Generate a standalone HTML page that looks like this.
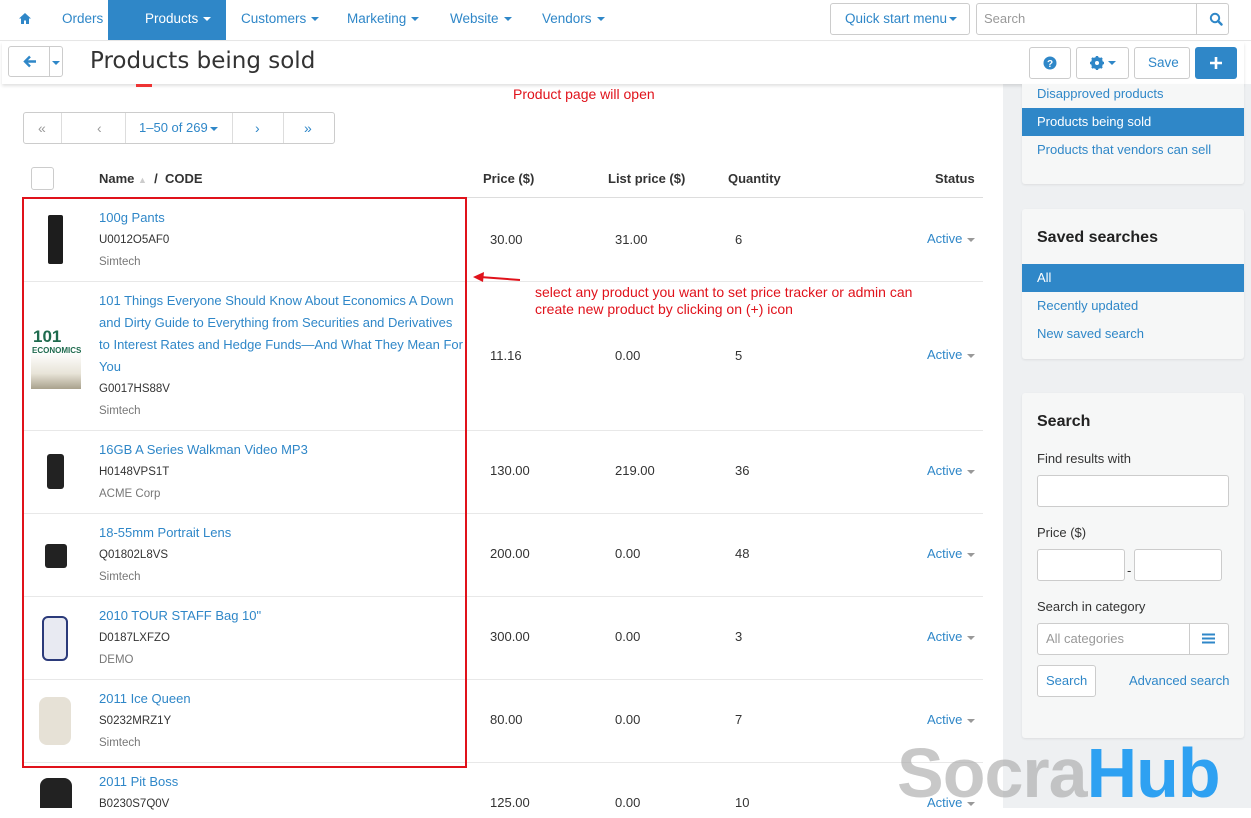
<!DOCTYPE html>
<html><head><meta charset="utf-8"><style>
*{box-sizing:border-box;margin:0;padding:0}
body{width:1251px;height:808px;overflow:hidden;position:relative;background:#fff;font-family:"Liberation Sans",sans-serif;font-size:13px;color:#333}
.a{position:absolute;white-space:nowrap}
.l{color:#2f87c8}
.c{display:inline-block;width:0;height:0;border-left:4px solid transparent;border-right:4px solid transparent;border-top:4px solid currentColor;vertical-align:middle;margin-left:5px}
.btn{position:absolute;border:1px solid #ccc;border-radius:3px;background:#fff}
.t{line-height:22px}
.sm{font-size:11.5px}
.g{color:#777}
</style></head><body>
<div class="a" style="left:1003px;top:84px;width:248px;height:724px;background:#eef0f2"></div>
<div class="a" style="left:0;top:0;width:1251px;height:41px;background:#fff;border-bottom:1px solid #e6e6e6"></div>
<svg class="a" style="left:18px;top:12px" width="14" height="13" viewBox="0 0 14 13"><path d="M7 1L1 6.5h2V12h3V8.5h2V12h3V6.5h2z" fill="#2f87c8"/></svg>
<div class="a l t" style="left:62px;top:8px;font-size:13.5px">Orders<span class="c"></span></div>
<div class="a" style="left:108px;top:0;width:118px;height:40px;background:#2f87c8"></div>
<div class="a t" style="left:145px;top:8px;font-size:13.5px;color:#fff">Products<span class="c"></span></div>
<div class="a l t" style="left:241px;top:8px;font-size:13.5px">Customers<span class="c"></span></div>
<div class="a l t" style="left:347px;top:8px;font-size:13.5px">Marketing<span class="c"></span></div>
<div class="a l t" style="left:450px;top:8px;font-size:13.5px">Website<span class="c"></span></div>
<div class="a l t" style="left:542px;top:8px;font-size:13.5px">Vendors<span class="c"></span></div>
<div class="btn" style="left:830px;top:3px;width:140px;height:32px"></div>
<div class="a l t" style="left:845px;top:8px;font-size:13.5px">Quick start menu<span class="c" style="margin-left:2px"></span></div>
<div class="btn" style="left:976px;top:3px;width:253px;height:32px"></div>
<div class="a t" style="left:984px;top:8px;font-size:13px;color:#999">Search</div>
<div class="a" style="left:1196px;top:4px;width:1px;height:30px;background:#ccc"></div>
<svg class="a" style="left:1209px;top:12px" width="14" height="14" viewBox="0 0 14 14"><circle cx="6" cy="6" r="4.2" stroke="#2f87c8" stroke-width="2" fill="none"/><path d="M9 9l3.5 3.5" stroke="#2f87c8" stroke-width="2.4" stroke-linecap="round"/></svg>
<div class="a" style="left:2px;top:42px;width:1242px;height:42px;background:#fff;box-shadow:0 2px 3px rgba(0,0,0,.12)"></div>
<div class="btn" style="left:8px;top:46px;width:55px;height:31px"></div>
<div class="a" style="left:49px;top:47px;width:1px;height:29px;background:#ccc"></div>
<svg class="a" style="left:23px;top:55px" width="14" height="13" viewBox="0 0 14 13"><path d="M7 1.5L2 6.5 7 11.5M2.5 6.5H13" stroke="#2f87c8" stroke-width="2.4" fill="none"/></svg>
<div class="a" style="left:48px;top:58px;color:#2f87c8;line-height:8px"><span class="c" style="margin-left:4px"></span></div>
<div class="a" style="left:90px;top:45px;font-family:'DejaVu Sans',sans-serif;font-size:23px;color:#333;line-height:32px">Products being sold</div>
<div class="btn" style="left:1029px;top:47px;width:42px;height:32px"></div>
<svg class="a" style="left:1043px;top:56px" width="14" height="14" viewBox="0 0 14 14"><circle cx="7" cy="7" r="6.5" fill="#2f87c8"/><text x="7" y="11" font-size="10" font-weight="bold" fill="#fff" text-anchor="middle" font-family="Liberation Sans">?</text></svg>
<div class="btn" style="left:1076px;top:47px;width:53px;height:32px"></div>
<svg class="a" style="left:1090px;top:56px" width="14" height="14" viewBox="0 0 14 14"><circle cx="7" cy="7" r="4.5" fill="none" stroke="#2f87c8" stroke-width="3"/><path d="M7 0v14M0 7h14M2 2l10 10M12 2L2 12" stroke="#2f87c8" stroke-width="2.4"/><circle cx="7" cy="7" r="2" fill="#fff"/></svg>
<div class="a" style="left:1103px;top:58px;color:#2f87c8;line-height:8px"><span class="c"></span></div>
<div class="btn" style="left:1134px;top:47px;width:56px;height:32px"></div>
<div class="a l t" style="left:1148px;top:52px;font-size:13.5px">Save</div>
<div class="a" style="left:1195px;top:47px;width:42px;height:32px;background:#2f87c8;border-radius:3px"></div>
<svg class="a" style="left:1209px;top:56px" width="14" height="14"><path d="M7 1v12M1 7h12" stroke="#fff" stroke-width="2.6"/></svg>
<div class="a" style="left:136px;top:84px;width:16px;height:3px;background:#e33"></div>
<div class="a" style="left:513px;top:86px;font-size:14px;color:#e0121b">Product page will open</div>
<div class="btn" style="left:23px;top:112px;width:312px;height:32px"></div>
<div class="a" style="left:61px;top:113px;width:1px;height:30px;background:#ddd"></div>
<div class="a" style="left:125px;top:113px;width:1px;height:30px;background:#ddd"></div>
<div class="a" style="left:232px;top:113px;width:1px;height:30px;background:#ddd"></div>
<div class="a" style="left:283px;top:113px;width:1px;height:30px;background:#ddd"></div>
<div class="a t" style="left:38px;top:117px;color:#999;font-size:14px">«</div>
<div class="a t" style="left:97px;top:117px;color:#999;font-size:14px">‹</div>
<div class="a l t" style="left:139px;top:117px">1–50 of 269<span class="c" style="margin-left:2px"></span></div>
<div class="a l t" style="left:255px;top:117px;font-size:14px">›</div>
<div class="a l t" style="left:304px;top:117px;font-size:14px">»</div>
<div class="btn" style="left:31px;top:167px;width:23px;height:23px"></div>
<div class="a t" style="left:99px;top:168px;font-weight:bold">Name <span style="color:#ccc;font-size:9px">▲</span> &nbsp;/ &nbsp;CODE</div>
<div class="a t" style="left:483px;top:168px;font-weight:bold">Price ($)</div>
<div class="a t" style="left:608px;top:168px;font-weight:bold">List price ($)</div>
<div class="a t" style="left:728px;top:168px;font-weight:bold">Quantity</div>
<div class="a t" style="left:935px;top:168px;font-weight:bold">Status</div>
<div class="a" style="left:23px;top:197px;width:960px;height:1px;background:#ddd"></div>
<div class="a" style="left:23px;top:281px;width:960px;height:1px;background:#e8e8e8"></div>
<div class="a" style="left:23px;top:430px;width:960px;height:1px;background:#e8e8e8"></div>
<div class="a" style="left:23px;top:513px;width:960px;height:1px;background:#e8e8e8"></div>
<div class="a" style="left:23px;top:596px;width:960px;height:1px;background:#e8e8e8"></div>
<div class="a" style="left:23px;top:679px;width:960px;height:1px;background:#e8e8e8"></div>
<div class="a" style="left:23px;top:762px;width:960px;height:1px;background:#e8e8e8"></div>

<div class="a" style="left:48px;top:215px;width:15px;height:49px;background:#1d1d1d;border-radius:2px"></div>
<div class="a l t" style="left:99px;top:207px">100g Pants</div>
<div class="a t sm" style="left:99px;top:229px">U0012O5AF0</div>
<div class="a t sm g" style="left:99px;top:251px">Simtech</div>
<div class="a t" style="left:490px;top:229px">30.00</div><div class="a t" style="left:615px;top:229px">31.00</div><div class="a t" style="left:735px;top:229px">6</div><div class="a l t" style="left:927px;top:228px">Active<span class="c" style="color:#999"></span></div>

<div class="a" style="left:31px;top:327px;width:50px;height:62px;background:linear-gradient(#fff 40%,#e8e4d8 75%,#a9a28d)"></div>
<div class="a" style="left:33px;top:328px;font-weight:bold;font-size:17px;color:#1f6b4e;line-height:18px">101</div>
<div class="a" style="left:32px;top:346px;font-weight:bold;font-size:8px;color:#1f6b4e">ECONOMICS</div>
<div class="a l" style="left:99px;top:290px;line-height:22px">101 Things Everyone Should Know About Economics A Down<br>and Dirty Guide to Everything from Securities and Derivatives<br>to Interest Rates and Hedge Funds—And What They Mean For<br>You</div>
<div class="a t sm" style="left:99px;top:378px">G0017HS88V</div>
<div class="a t sm g" style="left:99px;top:400px">Simtech</div>
<div class="a t" style="left:490px;top:345px">11.16</div><div class="a t" style="left:615px;top:345px">0.00</div><div class="a t" style="left:735px;top:345px">5</div><div class="a l t" style="left:927px;top:344px">Active<span class="c" style="color:#999"></span></div>

<div class="a" style="left:47px;top:454px;width:17px;height:35px;background:#222;border-radius:3px"></div>
<div class="a l t" style="left:99px;top:439px">16GB A Series Walkman Video MP3</div>
<div class="a t sm" style="left:99px;top:461px">H0148VPS1T</div>
<div class="a t sm g" style="left:99px;top:483px">ACME Corp</div>
<div class="a t" style="left:490px;top:460px">130.00</div><div class="a t" style="left:615px;top:460px">219.00</div><div class="a t" style="left:735px;top:460px">36</div><div class="a l t" style="left:927px;top:460px">Active<span class="c" style="color:#999"></span></div>

<div class="a" style="left:45px;top:544px;width:22px;height:24px;background:#222;border-radius:3px"></div>
<div class="a l t" style="left:99px;top:522px">18-55mm Portrait Lens</div>
<div class="a t sm" style="left:99px;top:544px">Q01802L8VS</div>
<div class="a t sm g" style="left:99px;top:566px">Simtech</div>
<div class="a t" style="left:490px;top:543px">200.00</div><div class="a t" style="left:615px;top:543px">0.00</div><div class="a t" style="left:735px;top:543px">48</div><div class="a l t" style="left:927px;top:543px">Active<span class="c" style="color:#999"></span></div>

<div class="a" style="left:42px;top:616px;width:26px;height:45px;background:#e8eaf2;border:2px solid #2b3a7a;border-radius:6px"></div>
<div class="a l t" style="left:99px;top:605px">2010 TOUR STAFF Bag 10"</div>
<div class="a t sm" style="left:99px;top:627px">D0187LXFZO</div>
<div class="a t sm g" style="left:99px;top:649px">DEMO</div>
<div class="a t" style="left:490px;top:626px">300.00</div><div class="a t" style="left:615px;top:626px">0.00</div><div class="a t" style="left:735px;top:626px">3</div><div class="a l t" style="left:927px;top:626px">Active<span class="c" style="color:#999"></span></div>

<div class="a" style="left:39px;top:697px;width:32px;height:48px;background:#e6e1d6;border-radius:8px"></div>
<div class="a l t" style="left:99px;top:688px">2011 Ice Queen</div>
<div class="a t sm" style="left:99px;top:710px">S0232MRZ1Y</div>
<div class="a t sm g" style="left:99px;top:732px">Simtech</div>
<div class="a t" style="left:490px;top:709px">80.00</div><div class="a t" style="left:615px;top:709px">0.00</div><div class="a t" style="left:735px;top:709px">7</div><div class="a l t" style="left:927px;top:709px">Active<span class="c" style="color:#999"></span></div>

<div class="a" style="left:40px;top:778px;width:32px;height:30px;background:#222;border-radius:8px 8px 0 0"></div>
<div class="a l t" style="left:99px;top:771px">2011 Pit Boss</div>
<div class="a t sm" style="left:99px;top:793px">B0230S7Q0V</div>
<div class="a t" style="left:490px;top:792px">125.00</div><div class="a t" style="left:615px;top:792px">0.00</div><div class="a t" style="left:735px;top:792px">10</div><div class="a l t" style="left:927px;top:792px">Active<span class="c" style="color:#999"></span></div>

<div class="a" style="left:22px;top:197px;width:445px;height:571px;border:2px solid #e0121b"></div>
<svg class="a" style="left:470px;top:270px" width="52" height="16"><path d="M50 10L10 7" stroke="#e0121b" stroke-width="2"/><path d="M3 7l11-5-1 10z" fill="#e0121b"/></svg>
<div class="a" style="left:535px;top:284px;font-size:14px;color:#e0121b;line-height:17px">select any product you want to set price tracker or admin can<br>create new product by clicking on (+) icon</div>

<div class="a" style="left:1022px;top:84px;width:222px;height:100px;background:#f6f7f7;border-radius:0 0 3px 3px;box-shadow:0 1px 2px rgba(0,0,0,.08)"></div>
<div class="a l t" style="left:1037px;top:83px">Disapproved products</div>
<div class="a" style="left:1022px;top:108px;width:222px;height:28px;background:#2f87c8"></div>
<div class="a t" style="left:1037px;top:111px;color:#fff">Products being sold</div>
<div class="a l t" style="left:1037px;top:139px">Products that vendors can sell</div>

<div class="a" style="left:1022px;top:209px;width:222px;height:150px;background:#f6f7f7;border-radius:3px;box-shadow:0 1px 2px rgba(0,0,0,.08)"></div>
<div class="a" style="left:1037px;top:229px;font-size:16px;font-weight:bold;color:#222">Saved searches</div>
<div class="a" style="left:1022px;top:264px;width:222px;height:28px;background:#2f87c8"></div>
<div class="a t" style="left:1037px;top:267px;color:#fff">All</div>
<div class="a l t" style="left:1037px;top:295px">Recently updated</div>
<div class="a l t" style="left:1037px;top:323px">New saved search</div>

<div class="a" style="left:1022px;top:393px;width:222px;height:345px;background:#f6f7f7;border-radius:3px;box-shadow:0 1px 2px rgba(0,0,0,.08)"></div>
<div class="a" style="left:1037px;top:413px;font-size:16px;font-weight:bold;color:#222">Search</div>
<div class="a t" style="left:1037px;top:448px">Find results with</div>
<div class="btn" style="left:1037px;top:475px;width:192px;height:32px"></div>
<div class="a t" style="left:1037px;top:522px">Price ($)</div>
<div class="btn" style="left:1037px;top:549px;width:88px;height:32px"></div>
<div class="a" style="left:1127px;top:563px">-</div>
<div class="btn" style="left:1134px;top:549px;width:88px;height:32px"></div>
<div class="a t" style="left:1037px;top:596px">Search in category</div>
<div class="btn" style="left:1037px;top:623px;width:192px;height:32px"></div>
<div class="a" style="left:1189px;top:624px;width:1px;height:30px;background:#ccc"></div>
<div class="a t" style="left:1046px;top:628px;color:#999">All categories</div>
<svg class="a" style="left:1202px;top:633px" width="13" height="11"><path d="M0 1.5h13M0 5.5h13M0 9.5h13" stroke="#2f87c8" stroke-width="2"/></svg>
<div class="btn" style="left:1037px;top:665px;width:59px;height:32px"></div>
<div class="a l t" style="left:1046px;top:670px">Search</div>
<div class="a l t" style="left:1129px;top:670px">Advanced search</div>

<div class="a" style="left:897px;top:728px;font-weight:bold;font-size:70px;line-height:90px;letter-spacing:-1px"><span style="color:rgba(170,170,170,.65)">Socra</span><span style="color:#2ea1f2">Hub</span></div>
</body></html>
